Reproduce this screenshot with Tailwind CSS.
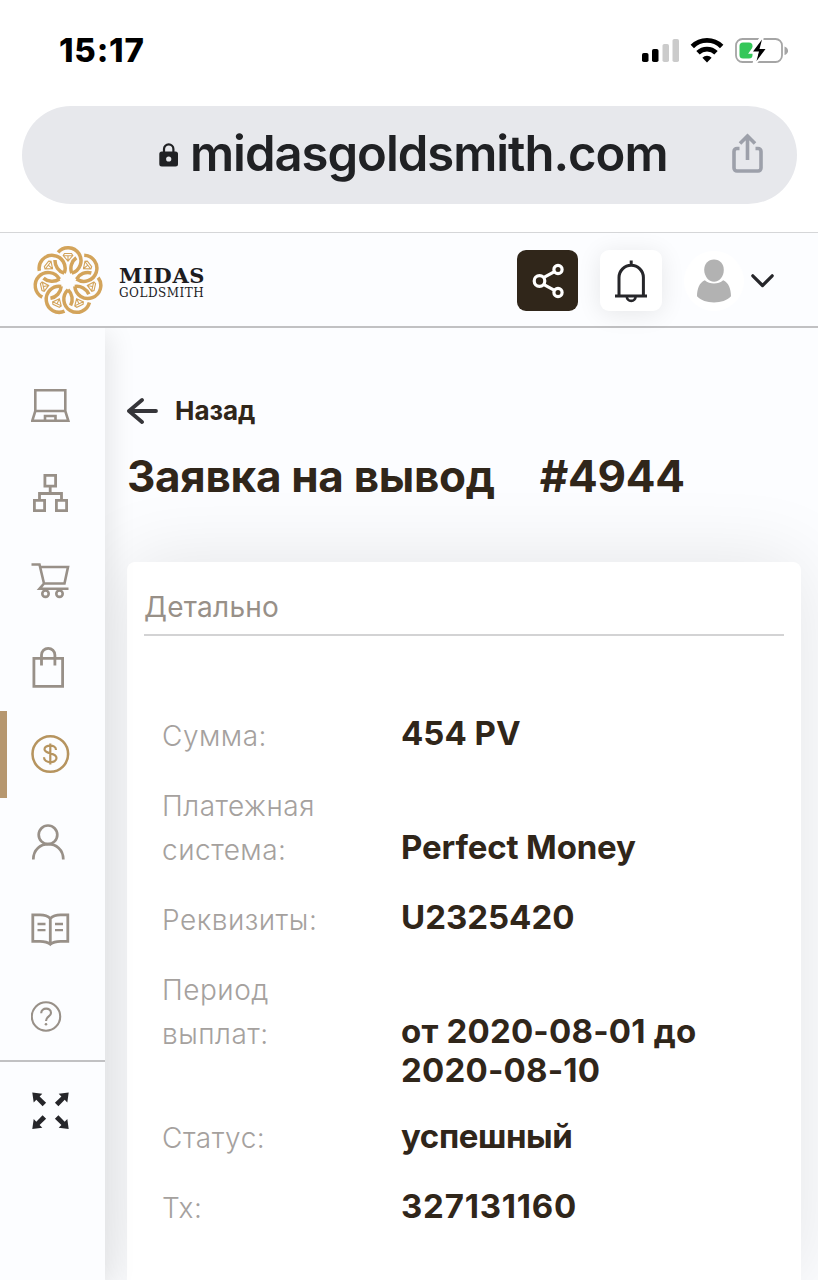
<!DOCTYPE html>
<html lang="ru">
<head>
    <meta charset="UTF-8">
    <meta name="viewport" content="width=device-width, initial-scale=1.0">
    <title>Midas Goldsmith</title>
    <script src="https://cdn.jsdelivr.net/npm/@tailwindcss/browser@4"></script>
</head>
<body class="h-[1280px] overflow-hidden flex flex-col bg-white font-['Inter',sans-serif] text-[#30261a]">
    <!-- Status bar -->
    <div class="h-[106px] shrink-0 flex items-start justify-between pl-[59px] pr-[30px]">
        <span class="mt-[31px] text-[33px] leading-[39px] font-extrabold text-black tracking-[0.8px]">15:17</span>
        <svg class="mt-[36px]" width="147" height="30" viewBox="0 0 147 30">
            <rect x="1" y="17" width="6.500" height="9" rx="1.800"/>
            <rect x="11" y="13" width="6.500" height="13" rx="1.800"/>
            <g fill="#cbcbcb">
                <rect x="21.500" y="8" width="6.500" height="18" rx="1.800"/>
                <rect x="31.500" y="3" width="6.500" height="23" rx="1.800"/>
            </g>
            <g fill="none" stroke="#000" stroke-width="4.800">
                <path d="M51.300 10.500a20.800 20.800 0 0 1 29.400 0"/>
                <path d="M57 16.800a12.800 12.800 0 0 1 18 0"/>
            </g>
            <path d="M66 26.400l-4.600-4.700a6.500 6.500 0 0 1 9.200 0z"/>
            <rect x="95" y="3" width="46" height="23" rx="6.500" fill="none" stroke="#a5a5a5" stroke-width="1.800"/>
            <path d="M143.500 10.500v8.500c4.700-1.500 4.700-7 0-8.500z" fill="#a5a5a5"/>
            <rect x="98.500" y="6.500" width="13" height="16" rx="3.500" fill="#34c759"/>
            <path d="M121 1l-10.500 15h6l-3.500 12.500L125.500 12h-6z" stroke="#fff" stroke-width="3.500"/>
            <path d="M121 3.500l-9 12h6l-2.500 9.500L124.500 13h-6z"/>
        </svg>
    </div>

    <!-- Address bar -->
    <div class="h-[98px] shrink-0 ml-[22px] mr-[21px] rounded-full bg-[#e7e8ec] flex items-center pl-[136px] pr-[34px]">
        <svg class="-mt-px" width="22" height="26" viewBox="0 0 22 26">
            <path d="M6 11V7a4.700 4.700 0 0 1 9.400 0v4" fill="none" stroke="#202124" stroke-width="2.200"/>
            <rect x="1.300" y="9.500" width="18.700" height="15" rx="2.500" fill="#202124"/>
            <circle cx="10.700" cy="17" r="2.600" fill="#e7e8ec"/>
        </svg>
        <span class="ml-[10px] -mt-[4px] text-[49px] leading-none font-semibold text-[#202124] tracking-[-1.020px] whitespace-nowrap">midasgoldsmith.com</span>
        <svg class="ml-auto -mt-[5px]" width="32" height="42" viewBox="0 0 32 42" fill="none" stroke="#9da0aa" stroke-width="3.600">
            <path d="M8.500 16.500H6a3 3 0 0 0-3 3V36a3 3 0 0 0 3 3h21a3 3 0 0 0 3-3V19.500a3 3 0 0 0-3-3h-2.500"/>
            <path d="M16.500 28V4M9 11.500L16.500 4l7.500 7.500"/>
        </svg>
    </div>

    <!-- Site header -->
    <header class="relative z-20 mt-[28px] h-[96px] pt-[2px] shrink-0 bg-[#fcfdff] border-t border-t-[#d5d6d8] border-b-2 border-b-[#c1c1c3] flex items-center pl-[32px]">
        <svg width="72" height="72" viewBox="-36 -36 72 72">
            <defs>
                <g id="petal" fill="none" stroke="#d3a45b">
                    <path d="M-9.960 -28.660A13 13 0 1 1 3.780 -7.860M-3.780 -7.860A13 13 0 0 1 -12.980 -20.980" stroke-width="3.500"/>
                    <path d="M-3.500 -27.500h7l1.300 2L0-19.800l-4.800-5.700zM-4.800 -25.300h9.600M0-20v-5" stroke-width="1.100"/>
                </g>
            </defs>
            <use href="#petal"/>
            <use href="#petal" transform="rotate(51.430)"/>
            <use href="#petal" transform="rotate(102.860)"/>
            <use href="#petal" transform="rotate(154.290)"/>
            <use href="#petal" transform="rotate(205.710)"/>
            <use href="#petal" transform="rotate(257.140)"/>
            <use href="#petal" transform="rotate(308.570)"/>
        </svg>
        <div class="ml-[15px] mt-[4px] w-[90px] font-['DejaVu_Serif',serif] text-[#1c1c1f] whitespace-nowrap">
            <div class="text-[21px] leading-[20px] font-bold tracking-[0.7px]">MIDAS</div>
            <div class="text-[12px] leading-[14px] tracking-[0.5px]">GOLDSMITH</div>
        </div>
        <button class="ml-auto w-[61px] h-[61px] rounded-[9px] bg-[#30261a] flex items-center justify-center">
            <svg width="34" height="36" viewBox="0 0 34 36" fill="none" stroke="#fff" stroke-width="3.200">
                <circle cx="8.500" cy="18" r="5.300"/>
                <circle cx="27" cy="6.500" r="4.100"/>
                <circle cx="27" cy="29.500" r="4.100"/>
                <path d="M12.500 14.700L23.500 8.700M12.500 21.300L23.500 27.300"/>
            </svg>
        </button>
        <button class="ml-[22px] w-[62px] h-[61px] rounded-[9px] bg-white shadow-[0_3px_24px_rgba(0,0,0,0.09)] flex items-center justify-center">
            <svg width="34" height="44" viewBox="0 0 34 44" fill="none" stroke="#26262a" stroke-width="3">
                <path d="M5 37V18.500a12.200 12.200 0 0 1 24.400 0V37M1 37h32M17.200 1.500v6"/>
                <path d="M12.800 37.500a4.400 4.400 0 0 0 8.800 0" stroke-width="2.600"/>
            </svg>
        </button>
        <div class="ml-[22px] size-[60px] rounded-full bg-white flex items-center justify-center">
            <svg width="36" height="44" viewBox="0 0 36 44" fill="#b2b2b2">
                <path d="M18 0.500c6 0 9.800 4.300 9.800 10.500S23.500 22.800 18 22.800 8.200 17 8.200 11 12 0.500 18 0.500z"/>
                <path d="M8.800 21.300c5 4.300 13.400 4.300 18.400 0C32.500 23.500 35 30 35 37.300 31 41.500 25 43.500 18 43.500S5 41.500 1 37.300C1 30 3.500 23.500 8.800 21.300z"/>
            </svg>
        </div>
        <svg class="ml-[7px] mr-[44px]" width="23" height="14" viewBox="0 0 23 14" fill="none" stroke="#26262a" stroke-width="3.200" stroke-linecap="round" stroke-linejoin="round">
            <path d="M1.800 1.800l9.700 9.700 9.700-9.700"/>
        </svg>
    </header>

    <div class="flex flex-1 min-h-0">
        <!-- Sidebar -->
        <aside class="relative z-10 w-[105px] shrink-0 bg-[#fcfdff] shadow-[4px_6px_26px_rgba(0,0,0,0.1)] text-[#989088]">
            <nav class="h-[734px] pt-[34px] border-b-2 border-[#c1c1c3] flex flex-col">
                <a class="h-[87.200px] shrink-0 flex items-center pl-[31px]">
                    <svg width="39" height="40" viewBox="0 0 39 40" fill="none" stroke="currentColor" stroke-width="2.600">
                        <path d="M4.300 25V4.300h30V25M4.300 25h30l3 9.700h-36zM14 34v-4h10.500v4"/>
                    </svg>
                </a>
                <a class="h-[87.200px] shrink-0 flex items-center pl-[31px]">
                    <svg width="39" height="40" viewBox="0 0 39 40" fill="none" stroke="currentColor" stroke-width="2.800">
                        <path d="M13.900 2.400h10.700v10.700H13.900zM3.400 27.400h10.200v10.200H3.400zM25.400 27.400h10.200v10.200H25.400zM19.200 13v7.500M8.500 27v-6.500h22V27"/>
                    </svg>
                </a>
                <a class="h-[87.200px] shrink-0 flex items-center pl-[31px]">
                    <svg width="39" height="40" viewBox="0 0 39 40" fill="none" stroke="currentColor" stroke-width="2.600">
                        <path d="M.500 4.500h8l4.500 19h20.500L37 7H9.500M13 23.500l-4.500 5.300h29"/>
                        <circle cx="14.500" cy="33.700" r="3.200"/>
                        <circle cx="28.500" cy="33.700" r="3.200"/>
                    </svg>
                </a>
                <a class="h-[87.200px] shrink-0 flex items-center pl-[31px]">
                    <svg width="39" height="44" viewBox="0 0 39 44" fill="none" stroke="currentColor" stroke-width="2.800">
                        <path d="M2.900 13.400h28.700v28H2.900zM10.500 20.500V10a6.700 6.700 0 0 1 13.400 0v10.500"/>
                    </svg>
                </a>
                <a class="h-[87.200px] shrink-0 flex items-center border-l-[7px] border-[#b6976f] pl-[24px] text-[#b6945f]">
                    <svg width="39" height="40" viewBox="0 0 39 40" fill="none" stroke="currentColor" stroke-width="2.600">
                        <circle cx="19.300" cy="20" r="17.800"/>
                        <path d="M19.300 9.500v21M25 16c0-6-11.500-5.500-11.500-.7 0 5.200 12 3 12 8.700 0 6-12.500 5.500-12.500-.7" stroke-width="2.200"/>
                    </svg>
                </a>
                <a class="h-[87.200px] shrink-0 flex items-center pl-[31px]">
                    <svg width="39" height="40" viewBox="0 0 39 40" fill="none" stroke="currentColor" stroke-width="2.700">
                        <circle cx="17" cy="12.800" r="9.300"/>
                        <path d="M2.300 37.500c0-20.500 30-20.500 30 0"/>
                    </svg>
                </a>
                <a class="h-[87.200px] shrink-0 flex items-center pl-[31px]">
                    <svg width="39" height="40" viewBox="0 0 39 40" fill="none" stroke="currentColor" stroke-width="2.800">
                        <path d="M19.300 9.500C16 6.100 13 5.900 9 5.900H1.800v26.400H9c4 0 7 .2 10.300 3 3.300-2.800 6.300-3 10.300-3h7.200V5.900h-7.200c-4 0-7 .2-10.300 3.600zM19.300 9.500V35"/>
                        <path d="M6.500 15h8M6.500 21.200h8M24 15h8M24 21.200h8" stroke-width="2.300"/>
                    </svg>
                </a>
                <a class="h-[87.200px] shrink-0 flex items-center pl-[31px]">
                    <svg width="39" height="40" viewBox="0 0 39 40" fill="none" stroke="currentColor" stroke-width="2.100">
                        <circle cx="15" cy="20.500" r="14.200"/>
                        <path d="M10.200 17.200c0-6 9.800-6 9.800-.3 0 3.600-5 3.500-5 8"/>
                        <circle cx="15" cy="28.200" r="1.300" fill="currentColor" stroke="none"/>
                    </svg>
                </a>
            </nav>
            <svg class="mt-[30px] ml-[32px]" width="37" height="38" viewBox="0 0 37 38" fill="#26262a">
                <defs>
                    <path id="arrow" d="M0 0l10 1.300-2.700 2.600 6.500 6.300-3.500 3.500L4 7.300l-2.600 2.700z"/>
                </defs>
                <use href="#arrow" transform="translate(.300 .500)"/>
                <use href="#arrow" transform="translate(36.700 .500) scale(-1 1)"/>
                <use href="#arrow" transform="translate(.300 37) scale(1 -1)"/>
                <use href="#arrow" transform="translate(36.700 37) scale(-1 -1)"/>
            </svg>
        </aside>

        <!-- Page content -->
        <main class="flex-1 min-w-0 bg-[#fcfdff] flex flex-col pl-[22px] pr-[17px]">
            <a class="mt-[67px] h-[32px] flex items-center text-[26px] leading-[32px] font-bold">
                <svg class="mr-[17px]" width="31" height="28" viewBox="0 0 31 28" fill="none" stroke="#36363a" stroke-width="3.800" stroke-linecap="round" stroke-linejoin="round">
                    <path d="M29 14H2M15 3L2 14l13 11"/>
                </svg>
                Назад
            </a>
            <h1 class="mt-[22px] h-[54px] flex gap-[45px] text-[44px] leading-[54px] font-bold tracking-[-0.300px] whitespace-nowrap">
                <span>Заявка на вывод</span>
                <span>#4944</span>
            </h1>

            <section class="mt-[59px] flex-1 rounded-t-[8px] bg-white shadow-[0_0_80px_rgba(0,0,0,0.1)] px-[17px]">
                <h2 class="h-[74px] pt-[28px] border-b-2 border-[#d3d3d4] text-[28px] leading-[34px] tracking-[0.250px] text-[#989088]">Детально</h2>
                <dl class="mt-[78px] pl-[18px] flex flex-col gap-[26px] text-[33px] leading-[39px] font-bold [&_dt]:w-[239px] [&_dt]:shrink-0 [&_dt]:text-[28px] [&_dt]:leading-[44px] [&_dt]:font-light [&_dt]:tracking-[0.500px] [&_dt]:text-[#a5a19e] whitespace-nowrap">
                    <div class="flex h-[44px]">
                        <dt>Сумма:</dt>
                        <dd>454 PV</dd>
                    </div>
                    <div class="flex h-[87.500px]">
                        <dt>Платежная<br>система:</dt>
                        <dd class="pt-[44px] tracking-[-0.150px]">Perfect Money</dd>
                    </div>
                    <div class="flex h-[44px]">
                        <dt>Реквизиты:</dt>
                        <dd>U2325420</dd>
                    </div>
                    <div class="flex h-[122px]">
                        <dt>Период<br>выплат:</dt>
                        <dd class="pt-[44px] tracking-[0.200px]">от 2020-08-01 до<br>2020-08-10</dd>
                    </div>
                    <div class="flex h-[44px]">
                        <dt>Статус:</dt>
                        <dd class="pt-px tracking-[-0.400px]">успешный</dd>
                    </div>
                    <div class="flex h-[44px]">
                        <dt>Tx:</dt>
                        <dd class="pt-px tracking-[0.800px]">327131160</dd>
                    </div>
                </dl>
            </section>
        </main>
    </div>
</body>
</html>
